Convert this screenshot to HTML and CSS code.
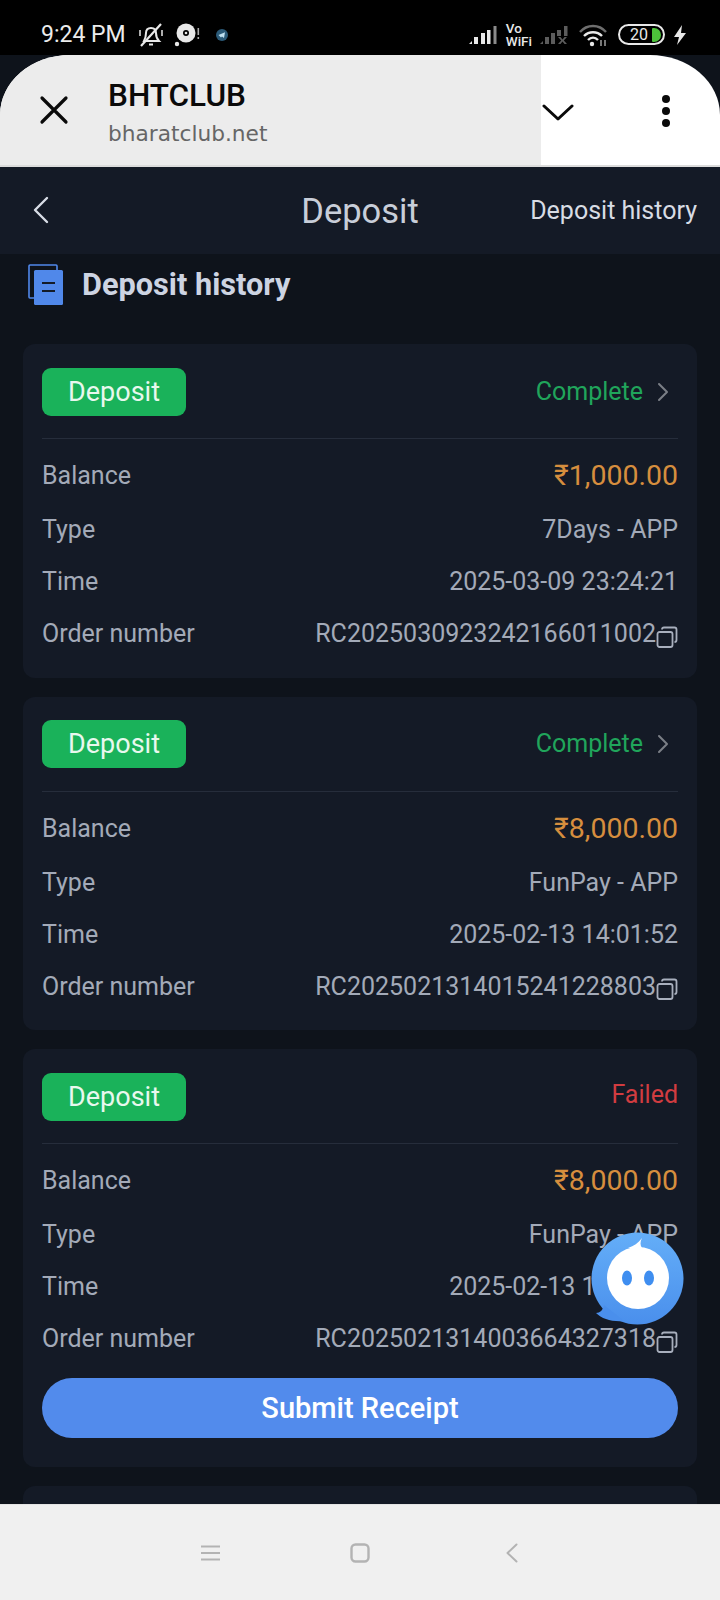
FILE: index.html
```html
<!DOCTYPE html>
<html lang="en">
<head>
<meta charset="utf-8">
<title>Deposit</title>
<link rel="stylesheet" href="styles.css">
</head>
<body>
<div class="phone">
  <div class="status">
    <div class="status-left">
      <span class="clock">9:24 PM</span>
      <svg class="ic-bell" viewBox="0 0 26 26" width="26" height="26" fill="none" stroke="#e8e8e8" stroke-width="2"><path d="M6 19c1-2 2-4 2-8 0-3 2-5 5-5s5 2 5 5c0 4 1 6 3 8z"/><path d="M11 22.500h4"/><path d="M3 24 23 2" stroke-width="2.200"/><path d="M2 8v6M24 8v6" stroke-width="1.500"/></svg>
      <svg class="ic-disc" viewBox="0 0 26 26" width="26" height="26"><circle cx="12" cy="11" r="9.500" fill="#e8e8e8"/><circle cx="12" cy="11" r="3" fill="#000"/><circle cx="12" cy="11" r="1.300" fill="#e8e8e8"/><circle cx="3" cy="22" r="2.200" fill="#e8e8e8"/><rect x="23.500" y="6" width="1.600" height="7" fill="#aaa"/><rect x="23.500" y="15" width="1.600" height="2" fill="#aaa"/></svg>
      <svg class="ic-tg" viewBox="0 0 14 14" width="14" height="14"><circle cx="7" cy="7" r="6" fill="#2b5a78"/><path d="M3.500 7 10 4.200 9 10 7 8.500 6 9.500z" fill="#bfe0f0"/></svg>
    </div>
    <div class="status-right">
      <svg class="sig-a" viewBox="0 0 28 20" width="28" height="20" fill="#e8e8e8"><path d="M0 19l3-3v3z"/><rect x="5" y="12" width="4" height="7"/><rect x="12" y="8" width="4" height="11"/><rect x="18" y="5" width="3.500" height="14"/><rect x="24.500" y="1" width="3" height="18" fill="#8a8a8a"/></svg>
      <span class="vowifi">Vo<br>WiFi</span>
      <svg class="sig-b" viewBox="0 0 28 20" width="28" height="20" fill="#5c5c5c"><path d="M0 19l3-3v3z"/><rect x="5" y="12" width="4" height="7"/><rect x="11" y="8" width="4" height="11"/><rect x="17" y="5" width="4" height="6"/><rect x="24" y="1" width="3.500" height="10"/><path d="M18 12h2.500l2 2.500 2-2.500H27l-3.200 3.500L27 19h-2.500l-2-2.500-2 2.500H18l3.200-3.500z"/></svg>
      <svg class="wifi" viewBox="0 0 30 24" width="30" height="24" fill="none"><path d="M2 9C9 1 21 1 28 9" stroke="#6e6e6e" stroke-width="2.400"/><path d="M6 13c5-5 13-5 18 0" stroke="#e8e8e8" stroke-width="2.400"/><path d="M10 17c3-3 7-3 10 0" stroke="#e8e8e8" stroke-width="2.400"/><circle cx="14" cy="21" r="2.200" fill="#e8e8e8"/><path d="M23 17v6M27 17v6" stroke="#aaa" stroke-width="1.400"/></svg>
      <span class="battery"><span class="batt-num">20</span><span class="batt-fill"></span></span>
      <svg class="bolt" viewBox="0 0 14 22" width="14" height="22"><path d="M9 1 1 13h5l-2 8 9-12H8z" fill="#e8e8e8"/></svg>
    </div>
  </div>

  <header class="browser">
    <div class="browser-main">
      <svg class="ic-close" viewBox="0 0 30 30" width="30" height="30" fill="none" stroke="#0a0a0a" stroke-width="3.200" stroke-linecap="round"><path d="M3 3 27 27M27 3 3 27"/></svg>
      <div class="browser-titles">
        <div class="site-name">BHTCLUB</div>
        <div class="site-url">bharatclub.net</div>
      </div>
    </div>
    <div class="browser-side">
      <svg class="ic-down" viewBox="0 0 32 20" width="32" height="20" fill="none" stroke="#0a0a0a" stroke-width="3" stroke-linecap="round" stroke-linejoin="round"><path d="M2 3 16 16 30 3"/></svg>
      <span class="dots"><i></i><i></i><i></i></span>
    </div>
  </header>

  <nav class="nav">
    <svg class="nav-back" viewBox="0 0 18 28" width="18" height="28" fill="none" stroke="#d8dde6" stroke-width="2.400" stroke-linecap="round" stroke-linejoin="round"><path d="M15 2 3 14 15 26"/></svg>
    <h1 class="nav-title">Deposit</h1>
    <span class="nav-link">Deposit history</span>
  </nav>

  <main class="content">
    <div class="section-title">
      <svg viewBox="0 0 36 42" width="36" height="42"><rect x="1" y="1" width="28" height="33" fill="none" stroke="#5088ea" stroke-width="1.600" rx="1"/><rect x="6" y="6" width="29" height="35" rx="1.500" fill="#5088ea"/><path d="M14 19h13M14 27h13" stroke="#141b27" stroke-width="2"/></svg>
      <h2>Deposit history</h2>
    </div>

    <section class="card">
      <div class="card-head">
        <span class="tag">Deposit</span>
        <span class="state ok">Complete</span>
        <svg class="chev" viewBox="0 0 12 20" width="12" height="20" fill="none" stroke="#7b7f86" stroke-width="2" stroke-linecap="round" stroke-linejoin="round"><path d="M2 2 10 10 2 18"/></svg>
      </div>
      <div class="row row-amount"><span>Balance</span><span class="amount">₹1,000.00</span></div>
      <div class="row"><span>Type</span><span>7Days - APP</span></div>
      <div class="row"><span>Time</span><span>2025-03-09 23:24:21</span></div>
      <div class="row"><span>Order number</span><span class="order">RC2025030923242166011002<svg class="copy" viewBox="0 0 22 22" width="22" height="22" fill="none" stroke="#a8afbd" stroke-width="1.800"><rect x="1.500" y="6" width="15" height="15" rx="2"/><path d="M6 3.500Q6 1.500 8 1.500H18.500Q20.500 1.500 20.500 3.500V14Q20.500 16 18.500 16"/></svg></span></div>
    </section>

    <section class="card">
      <div class="card-head">
        <span class="tag">Deposit</span>
        <span class="state ok">Complete</span>
        <svg class="chev" viewBox="0 0 12 20" width="12" height="20" fill="none" stroke="#7b7f86" stroke-width="2" stroke-linecap="round" stroke-linejoin="round"><path d="M2 2 10 10 2 18"/></svg>
      </div>
      <div class="row row-amount"><span>Balance</span><span class="amount">₹8,000.00</span></div>
      <div class="row"><span>Type</span><span>FunPay - APP</span></div>
      <div class="row"><span>Time</span><span>2025-02-13 14:01:52</span></div>
      <div class="row"><span>Order number</span><span class="order">RC2025021314015241228803<svg class="copy" viewBox="0 0 22 22" width="22" height="22" fill="none" stroke="#a8afbd" stroke-width="1.800"><rect x="1.500" y="6" width="15" height="15" rx="2"/><path d="M6 3.500Q6 1.500 8 1.500H18.500Q20.500 1.500 20.500 3.500V14Q20.500 16 18.500 16"/></svg></span></div>
    </section>

    <section class="card">
      <div class="card-head">
        <span class="tag">Deposit</span>
        <span class="state fail">Failed</span>
      </div>
      <div class="row row-amount"><span>Balance</span><span class="amount">₹8,000.00</span></div>
      <div class="row"><span>Type</span><span>FunPay - APP</span></div>
      <div class="row"><span>Time</span><span>2025-02-13 14:00:36</span></div>
      <div class="row"><span>Order number</span><span class="order">RC2025021314003664327318<svg class="copy" viewBox="0 0 22 22" width="22" height="22" fill="none" stroke="#a8afbd" stroke-width="1.800"><rect x="1.500" y="6" width="15" height="15" rx="2"/><path d="M6 3.500Q6 1.500 8 1.500H18.500Q20.500 1.500 20.500 3.500V14Q20.500 16 18.500 16"/></svg></span></div>
      <button class="submit">Submit Receipt</button>
    </section>

    <section class="card"></section>
  </main>

  <svg class="chat" viewBox="0 0 96 96" width="96" height="96">
    <defs><linearGradient id="chatg" x1="0" y1="0" x2="0" y2="1"><stop offset="0" stop-color="#64aef8"/><stop offset="1" stop-color="#4a8fec"/></linearGradient></defs>
    <circle cx="47.500" cy="47.500" r="46" fill="url(#chatg)"/>
    <path d="M6 82C10 82 13 79 14 74L34 90C22 91 12 88 6 82Z" fill="#4a8fec"/>
    <circle cx="48" cy="47" r="31" fill="#fff"/>
    <path d="M38 17C44 15 48 12 52 7 50 11 50 14 52 17Z" fill="#fff"/>
    <ellipse cx="37" cy="47" rx="5" ry="7.500" fill="#3f8ef0"/>
    <ellipse cx="59" cy="47" rx="5" ry="7.500" fill="#3f8ef0"/>
  </svg>

  <footer class="sysnav">
    <svg class="sys-menu" viewBox="0 0 19 16" width="19" height="16" stroke="#b3b3b3" stroke-width="2.200"><path d="M0 1.500h19M0 8h19M0 14.500h19"/></svg>
    <svg class="sys-home" viewBox="0 0 20 20" width="20" height="20" fill="none" stroke="#b3b3b3" stroke-width="2.400"><rect x="1.500" y="1.500" width="17" height="17" rx="4"/></svg>
    <svg class="sys-back" viewBox="0 0 12 20" width="12" height="20" fill="none" stroke="#b3b3b3" stroke-width="2" stroke-linecap="round" stroke-linejoin="round"><path d="M10.500 1.500 1.500 10 10.500 18.500"/></svg>
  </footer>
</div>
</body>
</html>
```

FILE: styles.css
```css
* { box-sizing: border-box; }
html, body { margin: 0; padding: 0; background: #000; }
body { font-family: Roboto, "Liberation Sans", sans-serif; }
.phone { position: relative; width: 720px; height: 1600px; display: flex; flex-direction: column; overflow: hidden; background: #0e131b; }

.status { height: 55px; flex: none; background: #000; display: flex; align-items: center; justify-content: space-between; padding: 14px 33px 0 41px; }
.status-left, .status-right { display: flex; align-items: center; }
.clock { color: #ececec; font-size: 23px; margin-right: 12px; }
.ic-disc { margin-left: 10px; }
.ic-tg { margin-left: 15px; }
.vowifi { color: #e8e8e8; font-size: 13.500px; line-height: 13px; font-weight: 500; margin-left: 9px; }
.sig-b { margin-left: 8px; }
.wifi { margin-left: 10px; }
.battery { width: 47px; height: 21px; border: 2px solid #e8e8e8; border-radius: 11px; display: flex; align-items: center; justify-content: flex-end; padding-right: 2px; gap: 4px; margin-left: 10px; }
.bolt { margin-left: 8px; }
.batt-num { color: #e8e8e8; font-size: 16px; }
.batt-fill { width: 9px; height: 14px; background: #4cc33a; border-radius: 1px 7px 7px 1px; }

.browser { height: 112px; flex: none; display: flex; background: #fff; border-radius: 70px 70px 0 0 / 60px 60px 0 0; overflow: hidden; border-bottom: 2px solid #dcdcdc; }
.browser-main { width: 541px; background: #ececec; display: flex; align-items: center; padding-left: 39px; }
.browser-titles { margin-left: 39px; margin-top: 7px; }
.site-name { font-size: 31.500px; font-weight: 500; color: #0a0a0a; line-height: 40px; }
.site-url { font-family: "DejaVu Sans", sans-serif; font-size: 21.700px; color: #666; line-height: 36px; }
.browser-side { flex: 1; display: flex; align-items: center; padding-left: 1px; }
.ic-down { margin-top: 6px; }
.dots { display: flex; flex-direction: column; gap: 4px; margin-left: 88px; margin-top: 2px; }
.dots i { width: 8px; height: 8px; border-radius: 50%; background: #0a0a0a; display: block; }

.nav { height: 87px; flex: none; background: #141a26; position: relative; display: flex; align-items: center; justify-content: center; }
.nav-back { position: absolute; left: 32px; top: 29px; }
.nav-title { margin: 0; font-size: 34.500px; font-weight: 400; color: #c8ced9; }
.nav-link { position: absolute; right: 23px; top: 29px; font-size: 25px; color: #d8dce4; }

.content { flex: 1; min-height: 0; overflow: hidden; padding: 0 23px; display: flex; flex-direction: column; }
.section-title { display: flex; align-items: center; height: 60px; padding-top: 2px; margin-bottom: 30.400px; padding-left: 5px; }
.section-title h2 { margin: -2px 0 0 18px; font-size: 30.700px; font-weight: 700; color: #cdd4e2; }

.card { flex: none; background: #141a26; border-radius: 12px; padding: 23.500px 19px 18px; margin-bottom: 19px; color: #a3aab8; }
.card-head { display: flex; align-items: center; height: 71.500px; padding-bottom: 22.500px; border-bottom: 1px solid #262d3b; margin-bottom: 8.500px; }
.tag { width: 144px; height: 48px; background: #1ab25a; border-radius: 9px; color: #e8f8ee; font-size: 27px; display: flex; align-items: center; justify-content: center; }
.state { margin-left: auto; font-size: 25px; margin-top: -1px; }
.state.ok { color: #20a55b; }
.state.fail { color: #d13c40; margin-top: -4px; }
.chev { margin-left: 14px; margin-right: 9px; }

.row { display: flex; justify-content: space-between; align-items: center; height: 52px; font-size: 25px; }
.row-amount { height: 56px; }
.amount { color: #d68e3e; font-size: 28.500px; margin-right: 0; }
.order { display: flex; align-items: center; }
.copy { margin-top: 6px; }
.submit { display: block; width: 100%; height: 60px; margin-top: 13px; margin-bottom: 11px; border: none; border-radius: 30px; background: #528bec; color: #fff; font: 500 29px Roboto, sans-serif; }

.chat { position: absolute; left: 590px; top: 1231px; }

.sysnav { position: absolute; left: 0; right: 0; bottom: 0; height: 96px; background: #f0f0f0; border-top: 1px solid #e4e4e4; display: flex; align-items: center; justify-content: center; padding-right: 1px; }
.sys-home { margin-left: 130px; }
.sys-back { margin-left: 136px; }
```
